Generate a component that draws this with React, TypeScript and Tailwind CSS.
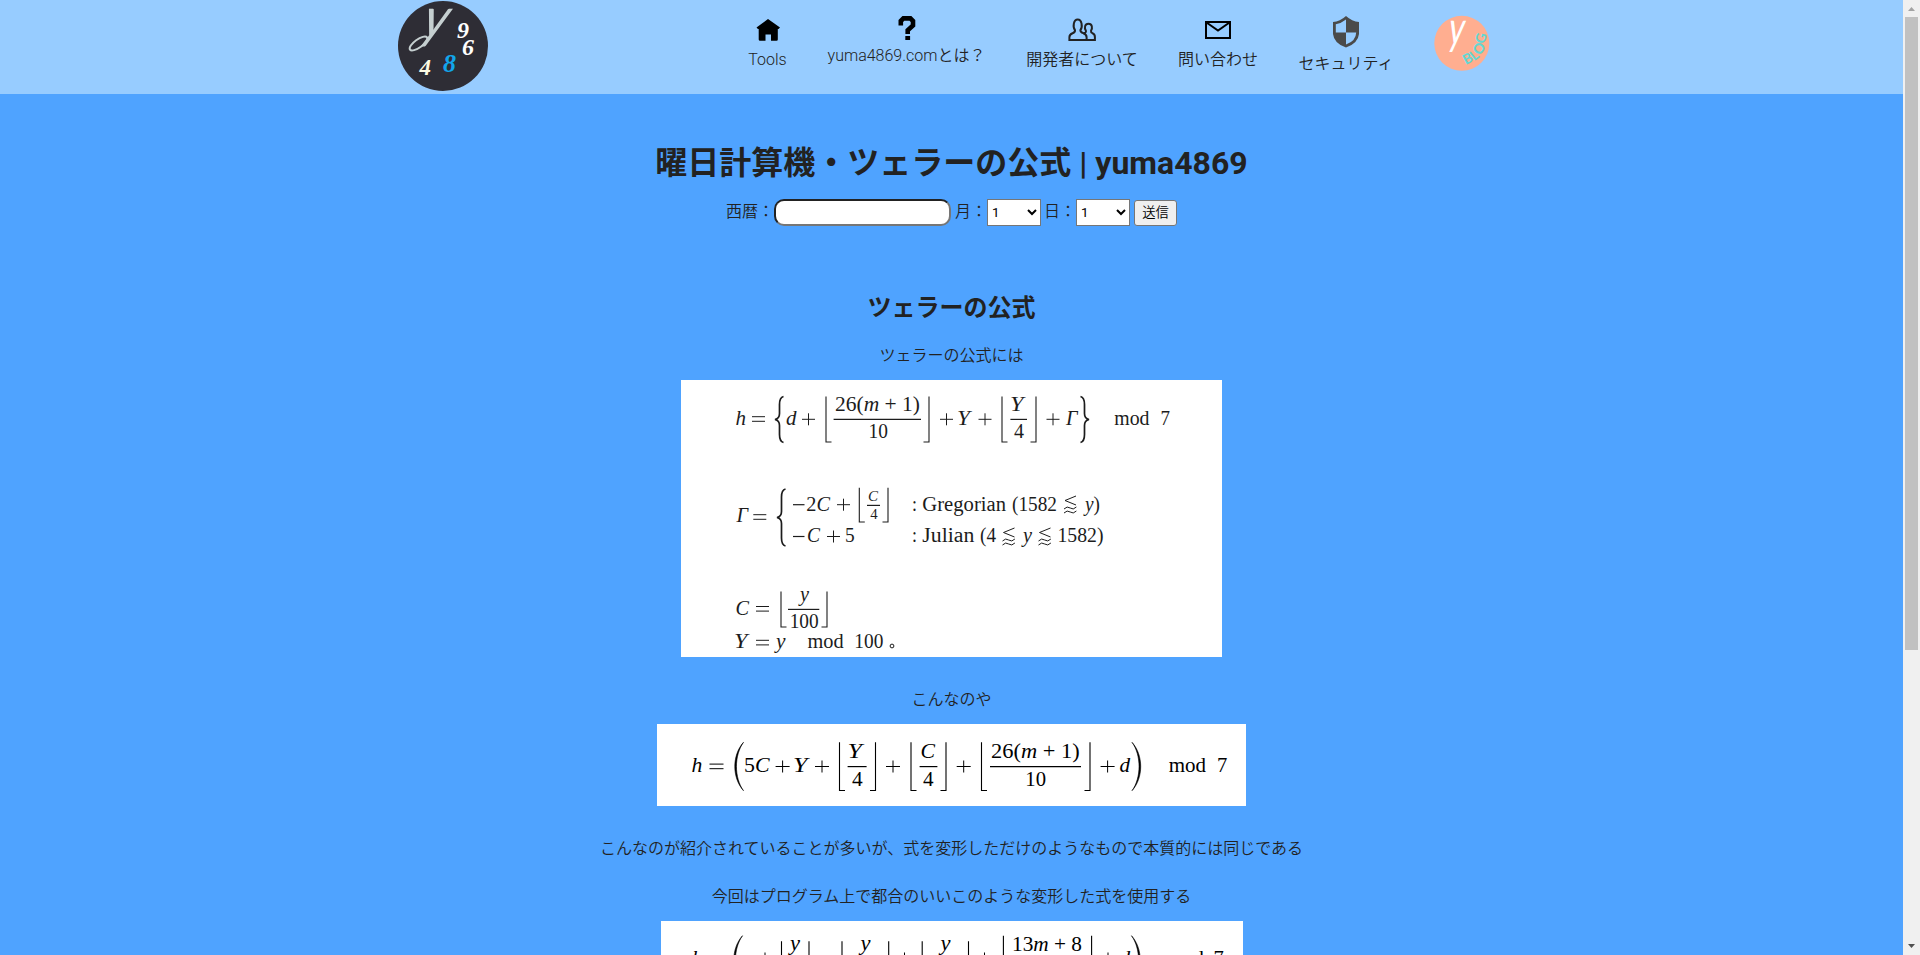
import React from "react";

const INK = "#1c1c1c";

type TProps = { x: number; r: number; y: number; s?: number; i?: boolean; children: React.ReactNode };

/* A run of formula text fitted between two x positions. */
function T({ x, r, y, s = 20, i = false, children }: TProps) {
  return (
    <text
      x={x}
      y={y}
      fontSize={s}
      fontStyle={i ? "italic" : "normal"}
      textLength={r - x}
      lengthAdjust="spacingAndGlyphs"
      fill="currentColor"
      stroke="none"
    >
      {children}
    </text>
  );
}

const V = ({ children }: { children: React.ReactNode }) => <tspan fontStyle="italic">{children}</tspan>;

function Plus({ x, y, w = 13 }: { x: number; y: number; w?: number }) {
  return <path d={`M${x} ${y}h${w}M${x + w / 2} ${y - 6}v12`} strokeWidth="1" />;
}
function Eq({ x, y, w = 13 }: { x: number; y: number; w?: number }) {
  return <path d={`M${x} ${y - 2.3}h${w}M${x} ${y + 2.3}h${w}`} strokeWidth="1" />;
}
function Bar({ x, r, y }: { x: number; r: number; y: number }) {
  return <path d={`M${x} ${y}H${r}`} strokeWidth="1.2" />;
}
function Floor({ l, r, t, b }: { l: number; r: number; t: number; b: number }) {
  return <path d={`M${l} ${t}V${b}h5.5M${r} ${t}V${b}h-5.5`} strokeWidth="1.1" />;
}
function Brace({ x, t, b, flip = false }: { x: number; t: number; b: number; flip?: boolean }) {
  const d = flip ? -1 : 1;
  const m = (t + b) / 2;
  return (
    <path
      d={`M${x + 8.5 * d} ${t}Q${x + 4.5 * d} ${t + 1} ${x + 4.5 * d} ${t + 8}V${m - 6}Q${x + 4.5 * d} ${m - 1} ${x} ${m}Q${x + 4.5 * d} ${m + 1} ${x + 4.5 * d} ${m + 6}V${b - 8}Q${x + 4.5 * d} ${b - 1} ${x + 8.5 * d} ${b}`}
      strokeWidth="1.7"
    />
  );
}
function Paren({ x, t, b, flip = false }: { x: number; t: number; b: number; flip?: boolean }) {
  const d = flip ? -1 : 1;
  return (
    <path
      d={`M${x + 9 * d} ${t}C${x - 2.6 * d} ${t + 13} ${x - 2.6 * d} ${b - 13} ${x + 9 * d} ${b}C${x - 0.4 * d} ${b - 13} ${x - 0.4 * d} ${t + 13} ${x + 9 * d} ${t}`}
      fill="currentColor"
      strokeWidth="0.6"
    />
  );
}
function LessApprox({ x, y }: { x: number; y: number }) {
  return (
    <path
      d={`M${x + 12} ${y}L${x + 1} ${y + 4.5}L${x + 12} ${y + 9}M${x} ${y + 13}q3.2 -3.4 6.2 -1t6.2 -1M${x} ${y + 17}q3.2 -3.4 6.2 -1t6.2 -1`}
      strokeWidth="1"
    />
  );
}

const svgClass = "block [font-family:'Liberation_Serif',serif]";

function FormulaGregorian() {
  return (
    <svg className={svgClass} width="541" height="277" viewBox="681 380 541 277" fill="none" stroke="currentColor" color={INK}>
      <T x={735.5} r={746} y={425} i>h</T>
      <Eq x={752} y={419} />
      <Brace x={775} t={396.5} b={442.5} />
      <T x={786} r={796.5} y={425} i>d</T>
      <Plus x={802} y={419.3} />
      <Floor l={826} r={929} t={396.5} b={442} />
      <T x={835} r={920} y={410.5}>26(<V>m</V> + 1)</T>
      <Bar x={833.6} r={921} y={419.4} />
      <T x={868.6} r={888} y={438}>10</T>
      <Plus x={940} y={419.3} />
      <T x={957} r={970} y={425} i>Y</T>
      <Plus x={978.5} y={419.3} />
      <Floor l={1002} r={1036} t={396.5} b={442} />
      <T x={1010} r={1023.5} y={410.5} i>Y</T>
      <Bar x={1010.4} r={1027} y={419.4} />
      <T x={1014} r={1024} y={438}>4</T>
      <Plus x={1046.5} y={419.3} />
      <T x={1066} r={1077.5} y={425} i>Γ</T>
      <Brace x={1089} t={396.5} b={442.5} flip />
      <T x={1114.3} r={1149.5} y={425}>mod</T>
      <T x={1160.5} r={1170} y={425}>7</T>

      <T x={736.5} r={748} y={522} i>Γ</T>
      <Eq x={753.3} y={517} />
      <Brace x={777} t={489} b={546} />
      <Bar x={793} r={804.5} y={504.7} />
      <T x={806.3} r={830} y={510.5}>2<V>C</V></T>
      <Plus x={837} y={504.7} />
      <Floor l={859.3} r={888} t={487.7} b={522} />
      <T x={868} r={878} y={501} s={14} i>C</T>
      <Bar x={867} r={880} y={505.4} />
      <T x={870.2} r={877.6} y={518.5} s={14}>4</T>
      <T x={912} r={917} y={510.5}>:</T>
      <T x={922.3} r={1006} y={510.5}>Gregorian</T>
      <T x={1012} r={1057} y={510.5}>(1582</T>
      <LessApprox x={1064} y={496} />
      <T x={1085} r={1100} y={510.5}><V>y</V>)</T>
      <Bar x={793} r={804.5} y={536.5} />
      <T x={807} r={820} y={542} i>C</T>
      <Plus x={827} y={536.5} />
      <T x={845} r={854.7} y={542}>5</T>
      <T x={912} r={917} y={542}>:</T>
      <T x={922.3} r={974.3} y={542}>Julian</T>
      <T x={980} r={996} y={542}>(4</T>
      <LessApprox x={1002.5} y={528} />
      <T x={1023} r={1032} y={542} i>y</T>
      <LessApprox x={1038.5} y={528} />
      <T x={1057.5} r={1103.5} y={542}>1582)</T>

      <T x={735.5} r={749} y={614.5} i>C</T>
      <Eq x={756} y={608.8} />
      <Floor l={781} r={827} t={591.5} b={627} />
      <T x={800} r={809} y={601} i>y</T>
      <Bar x={788} r={819.3} y={609.4} />
      <T x={789.7} r={818.7} y={627.7}>100</T>
      <T x={734} r={747.5} y={648.3} i>Y</T>
      <Eq x={756} y={642.6} />
      <T x={776} r={785.5} y={648.3} i>y</T>
      <T x={807.5} r={843.7} y={648.3}>mod</T>
      <T x={854.3} r={883.3} y={648.3}>100</T>
      <circle cx="892" cy="646" r="1.9" strokeWidth="1" />
    </svg>
  );
}

function FormulaShort() {
  return (
    <svg className={svgClass} width="589" height="82" viewBox="657 724 589 82" fill="none" stroke="currentColor" color="#000">
      <T x={691.5} r={702.3} y={771.8} i>h</T>
      <Eq x={709.5} y={766.4} w={14} />
      <Paren x={734.5} t={742.3} b={790.7} />
      <T x={744} r={769.5} y={771.8}>5<V>C</V></T>
      <Plus x={775.6} y={766.5} w={14} />
      <T x={793} r={807.5} y={771.8} i>Y</T>
      <Plus x={815} y={766.5} w={14} />
      <Floor l={839.5} r={875.5} t={742.3} b={790.5} />
      <T x={847.5} r={862} y={758.3} i>Y</T>
      <Bar x={847.6} r={866.6} y={766.6} />
      <T x={852} r={862.7} y={786.3}>4</T>
      <Plus x={886} y={766.5} w={14} />
      <Floor l={911} r={946} t={742.3} b={790.5} />
      <T x={920.5} r={935} y={758.3} i>C</T>
      <Bar x={919.6} r={937.4} y={766.6} />
      <T x={923} r={933.6} y={786.3}>4</T>
      <Plus x={956.7} y={766.5} w={14} />
      <Floor l={981.5} r={1090} t={742.3} b={790.5} />
      <T x={991} r={1079.7} y={758.3}>26(<V>m</V> + 1)</T>
      <Bar x={990} r={1081} y={766.6} />
      <T x={1025.3} r={1046} y={786.3}>10</T>
      <Plus x={1100.6} y={766.5} w={14} />
      <T x={1119.4} r={1130} y={771.8} i>d</T>
      <Paren x={1141} t={742.3} b={790.7} flip />
      <T x={1168.7} r={1206} y={771.8}>mod</T>
      <T x={1217} r={1227.3} y={771.8}>7</T>
    </svg>
  );
}

function FormulaProgram() {
  return (
    <svg className={svgClass} width="582" height="82" viewBox="661 921 582 82" fill="none" stroke="currentColor" color="#000">
      <T x={692} r={702.5} y={965} i>h</T>
      <Paren x={733.5} t={935.7} b={984} />
      <Plus x={758.5} y={958.5} w={13} />
      <Floor l={781.5} r={809} t={941.3} b={978} />
      <T x={790} r={800} y={950} i>y</T>
      <Floor l={842} r={888.7} t={941.3} b={978} />
      <T x={860.4} r={870.4} y={950} i>y</T>
      <Plus x={898} y={958.5} w={13} />
      <Floor l={922.2} r={968.5} t={941.3} b={978} />
      <T x={940.6} r={950.6} y={950} i>y</T>
      <Plus x={978} y={958.5} w={13} />
      <Floor l={1003.4} r={1091.6} t={935.7} b={984} />
      <T x={1012} r={1082} y={950.6}>13<V>m</V> + 8</T>
      <Plus x={1101.5} y={958.5} w={13} />
      <T x={1119.6} r={1130.2} y={965} i>d</T>
      <Paren x={1140.5} t={935.7} b={984} flip />
      <T x={1167} r={1204} y={965}>mod</T>
      <T x={1213.5} r={1223.8} y={965}>7</T>
    </svg>
  );
}

function Logo() {
  return (
    <svg width="90" height="92" viewBox="398 0 90 92" className="block shrink-0">
      <circle cx="443" cy="46" r="45" fill="#2e2d35" />
      <ellipse cx="418.500" cy="43.500" rx="10.500" ry="4" transform="rotate(-36 418.500 43.500)" fill="none" stroke="#c5cfd0" strokeWidth="2" />
      <text
        transform="translate(420 37) skewX(-14)"
        fontSize="56"
        fontStyle="italic"
        fontWeight="400"
        fill="#c5cfd0"
        textLength="25"
        lengthAdjust="spacingAndGlyphs"
        className="[font-family:Lato,sans-serif]"
      >
        y
      </text>
      <g fontStyle="italic" fontWeight="700" className="[font-family:'Liberation_Serif',serif]">
        <text x="457" y="38" fontSize="24" fill="#fff">9</text>
        <text x="462" y="54.500" fontSize="24" fill="#fff">6</text>
        <text x="419.500" y="74.500" fontSize="23" fill="#fdfbe4">4</text>
        <text x="443" y="71.500" fontSize="26" fill="#12a5ea">8</text>
      </g>
    </svg>
  );
}

function BlogBadge() {
  return (
    <svg width="56" height="56" viewBox="1435 15 56 56" className="block">
      <circle cx="1462.800" cy="43.300" r="27.500" fill="#ffae90" />
      <text
        transform="translate(1449 44) skewX(-4)"
        fontSize="46"
        fontStyle="italic"
        fontWeight="400"
        fill="#fff"
        textLength="16"
        lengthAdjust="spacingAndGlyphs"
        className="[font-family:Lato,sans-serif]"
      >
        y
      </text>
      <g fill="#62d8d4" fontSize="14" fontWeight="700" textAnchor="middle" className="[font-family:Lato,sans-serif]">
        <text transform="translate(1468.500 58.500) rotate(-28)" y="5">B</text>
        <text transform="translate(1475 55) rotate(-38)" y="5">L</text>
        <text transform="translate(1480 48.500) rotate(-56)" y="5" fontWeight="900">O</text>
        <text transform="translate(1482 38) rotate(-76)" y="5">G</text>
      </g>
    </svg>
  );
}

const HomeIcon = () => (
  <svg width="24" height="24" viewBox="756 18 24 24" className="block">
    <path d="M768 19l12 8.500-1.500 1.500h-.7v10.500q0 1.300-1.300 1.300h-5.500v-6.300h-5.500v6.300h-5.500q-1.300 0-1.300-1.300V29h-.7l-1.500-1.500z" fill="#000" />
  </svg>
);
const HelpIcon = () => (
  <svg width="18" height="24" viewBox="0 0 18 24" className="block">
    <path d="M2.800 9.500V5l2.600-2.600h7L15 5v4.500l-5.300 4.800V18" fill="none" stroke="#000" strokeWidth="4.600" />
    <path d="M7.300 20h4.800v4H7.300z" fill="#000" />
  </svg>
);
const PeopleIcon = () => (
  <svg width="28" height="24" viewBox="0 0 28 24" className="block" fill="none" stroke="#222" strokeWidth="2">
    <path d="M7 12.200C4.600 9 5.400 1.400 9.700 1.400S14.800 9 12.400 12.200c0 2 1 2.300 3 3 2.300.9 3.200 1.700 3.200 4v2.700H1.400v-2.700c0-2.300.9-3.100 3.200-4 2-.7 2.700-1.300 2.400-3z" />
    <path d="M15.700 15.300c2.400-.6 2.500-1.200 2.200-2.500-1.800-2.800-1.200-7 2.600-7s4.200 4.500 2.500 7c-.2 1.600.3 1.900 1.500 2.400 1.800.7 2.400 1.600 2.400 3.700v3h-8.400" />
  </svg>
);
const MailIcon = () => (
  <svg width="26" height="18" viewBox="0 0 26 18" className="block" fill="none" stroke="#000" strokeWidth="2">
    <path d="M1 1h24v16H1zM1.500 1.500L13 9.500 24.500 1.500" />
  </svg>
);
const ShieldIcon = () => (
  <svg width="26" height="32" viewBox="0 0 26 32" className="block">
    <path d="M13 0Q19 5.500 26 6v12q-1 9.500-13 13.500Q1 27.500 0 18V6q7-.5 13-6z" fill="#4a4a4a" />
    <path d="M13 3.500V16.500H2.800V8.200Q8 7.500 13 3.500zM13 16.500h10.200Q23 25 13 28.500z" fill="#97ccff" />
  </svg>
);

function NavItem({ label, box, icon }: { label: string; box: string; icon: React.ReactNode }) {
  return (
    <a className={`flex shrink-0 flex-col items-center whitespace-nowrap leading-6 ${box}`}>
      {icon}
      <span>{label}</span>
    </a>
  );
}

export default function App() {
  return (
    <div className="flex h-[955px] w-full overflow-hidden bg-[#4fa3ff] text-base font-[350] text-[#222] [font-family:Roboto,'Noto_Sans_CJK_JP',sans-serif]">
      <div className="flex min-w-0 flex-1 flex-col">
        <header className="flex h-[94px] shrink-0 items-start bg-[#97ccff] pl-[398px]">
          <Logo />
          <nav className="ml-[260px] flex items-start gap-10">
            <NavItem label="Tools" box="w-[39px] pt-[18px] gap-1.5" icon={<HomeIcon />} />
            <NavItem label="yuma4869.comとは？" box="w-[159px] pt-4 gap-1" icon={<HelpIcon />} />
            <NavItem label="開発者について" box="w-28 pt-[18px] gap-1.5" icon={<PeopleIcon />} />
            <NavItem label="問い合わせ" box="w-20 pt-[21px] gap-[9px]" icon={<MailIcon />} />
            <NavItem label="セキュリティ" box="w-24 pt-4 gap-1" icon={<ShieldIcon />} />
            <a className="pt-[15px]">
              <BlogBadge />
            </a>
          </nav>
        </header>

        <main className="flex flex-col items-center">
          <h1 className="mt-[45px] h-12 whitespace-nowrap text-[32px] font-bold leading-[48px]">曜日計算機・ツェラーの公式 | yuma4869</h1>
          <form className="mt-[11px] flex h-7 items-center whitespace-nowrap">
            <label className="w-12 leading-6">西暦：</label>
            <input className="h-[27px] w-[177px] rounded-[10px] border-2 border-b-[#767676] border-l-[#222] border-r-[#767676] border-t-[#222] bg-white px-1" />
            <label className="ml-1 w-8 leading-6">月：</label>
            <select className="h-[27px] w-[54px] border border-[#767676] bg-white text-[13.33px] font-normal text-black [font-family:Roboto,sans-serif]">
              <option>1</option>
            </select>
            <label className="ml-[3px] w-8 leading-6">日：</label>
            <select className="h-[27px] w-[54px] border border-[#767676] bg-white text-[13.33px] font-normal text-black [font-family:Roboto,sans-serif]">
              <option>1</option>
            </select>
            <button type="button" className="ml-1 mt-px h-[26px] w-[43px] rounded-[3px] border border-[#767676] bg-[#efefef] text-[13.33px] font-[350] leading-5 text-black">
              送信
            </button>
          </form>

          <h2 className="mt-16 h-9 text-2xl font-bold leading-9">ツェラーの公式</h2>
          <p className="mt-[18px] h-6 leading-6">ツェラーの公式には</p>
          <div className="mt-3 bg-white">
            <FormulaGregorian />
          </div>
          <p className="mt-[31px] h-6 leading-6">こんなのや</p>
          <div className="mt-3 bg-white">
            <FormulaShort />
          </div>
          <p className="mt-[31px] h-6 leading-6">こんなのが紹介されていることが多いが、式を変形しただけのようなもので本質的には同じである</p>
          <p className="mt-6 h-6 leading-6">今回はプログラム上で都合のいいこのような変形した式を使用する</p>
          <div className="mt-3 bg-white">
            <FormulaProgram />
          </div>
        </main>
      </div>

      <div className="flex h-full w-[17px] shrink-0 flex-col items-center bg-[#f0f0f0]">
        <svg width="17" height="17" className="block shrink-0">
          <path d="M5 11l3.500-4 3.500 4z" fill="#a3a3a3" />
        </svg>
        <div className="h-[633px] w-[13px] bg-[#c1c1c1]" />
        <div className="flex-1" />
        <svg width="17" height="17" className="block shrink-0">
          <path d="M5 6l3.500 4 3.500-4z" fill="#505050" />
        </svg>
      </div>
    </div>
  );
}
